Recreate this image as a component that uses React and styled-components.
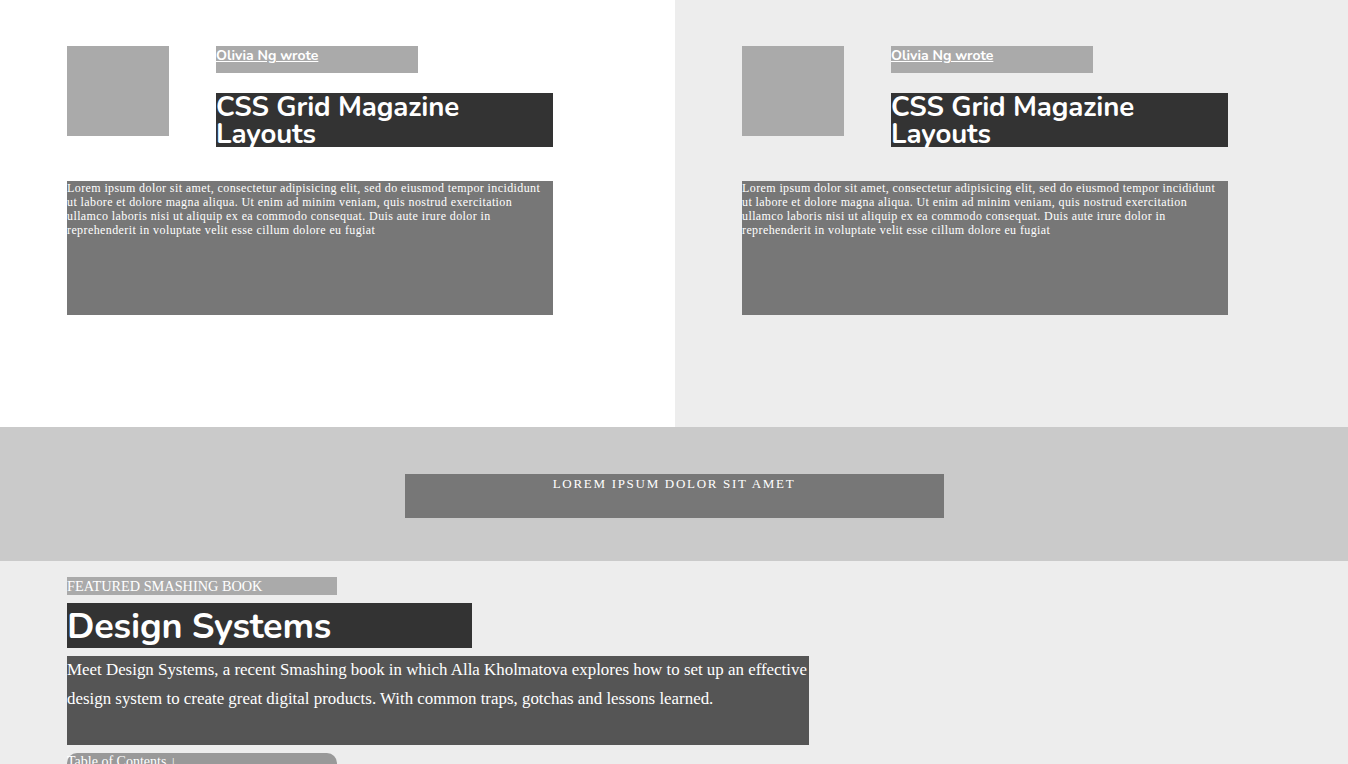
import React from "react";
import styled, { createGlobalStyle } from "styled-components";

const Global = createGlobalStyle`
  html, body { margin: 0; padding: 0; background: #ededed; }
  body { font-family: "Liberation Serif", serif; color: #fff; }
  * { box-sizing: border-box; }
`;

const Top = styled.section`
  display: grid;
  grid-template-columns: 675px 1fr;
  height: 427px;
`;

const Column = styled.div`
  background: ${(p) => (p.$alt ? "#ededed" : "#ffffff")};
  padding: 46px 0 0 67px;
`;

const Card = styled.article`
  width: 486px;
  display: grid;
  grid-template-columns: 102px 337px;
  column-gap: 47px;
  grid-template-rows: auto auto;
`;

const Avatar = styled.div`
  width: 102px;
  height: 90px;
  background: #aaaaaa;
`;

const Head = styled.div`
  display: flex;
  flex-direction: column;
  gap: 20px;
`;

const Byline = styled.a`
  display: block;
  width: 202px;
  height: 27px;
  background: #aaaaaa;
  color: #fff;
  font-family: "Nunito", "Open Sans", sans-serif;
  font-weight: 700;
  font-size: 14px;
  line-height: 19px;
  text-decoration: underline;
`;

const Title = styled.h2`
  margin: 0;
  height: 54px;
  background: #333333;
  color: #fff;
  font-family: "Nunito", "Open Sans", sans-serif;
  font-weight: 700;
  font-size: 27.6px;
  line-height: 27px;
  letter-spacing: -0.1px;
  padding-top: 1px;
`;

const Body = styled.p`
  grid-column: 1 / -1;
  margin: 34px 0 0;
  height: 134px;
  background: #777777;
  color: #fff;
  font-size: 12px;
  letter-spacing: 0.4px;
  line-height: 14px;
  padding-top: 0;
`;

const Band = styled.section`
  background: #cacaca;
  height: 134px;
  display: flex;
  justify-content: center;
  padding-top: 47px;
`;

const BandBox = styled.div`
  width: 539px;
  height: 44px;
  background: #777777;
  text-align: center;
  text-transform: uppercase;
  letter-spacing: 1.7px;
  font-size: 13px;
  line-height: 20px;
`;

const Featured = styled.section`
  padding: 16px 67px 0;
  display: flex;
  flex-direction: column;
  align-items: flex-start;
`;

const Label = styled.div`
  width: 270px;
  height: 18px;
  background: #aaaaaa;
  font-size: 14.3px;
  line-height: 18px;
  text-transform: uppercase;
`;

const BookTitle = styled.h1`
  margin: 8px 0 0;
  width: 405px;
  height: 45px;
  background: #333333;
  font-family: "Nunito", "Open Sans", sans-serif;
  font-weight: 700;
  font-size: 36px;
  line-height: 48px;
  letter-spacing: -0.2px;
`;

const Blurb = styled.p`
  margin: 8px 0 0;
  width: 742px;
  height: 89px;
  background: #555555;
  font-size: 16.9px;
  line-height: 28.5px;
`;

const TocButton = styled.button`
  margin-top: 8px;
  width: 270px;
  height: 30px;
  border: 0;
  border-radius: 10px 10px 0 0;
  background: #999999;
  color: #fff;
  font-family: "Liberation Serif", serif;
  font-size: 14px;
  text-align: left;
  padding: 0;
  line-height: 18px;
  align-self: flex-start;
  display: flex;
  align-items: flex-start;
`;

const text =
  "Lorem ipsum dolor sit amet, consectetur adipisicing elit, sed do eiusmod tempor incididunt ut labore et dolore magna aliqua. Ut enim ad minim veniam, quis nostrud exercitation ullamco laboris nisi ut aliquip ex ea commodo consequat. Duis aute irure dolor in reprehenderit in voluptate velit esse cillum dolore eu fugiat";

function ArticleCard() {
  return (
    <Card>
      <Avatar />
      <Head>
        <Byline href="#">Olivia Ng wrote</Byline>
        <Title>CSS Grid Magazine Layouts</Title>
      </Head>
      <Body>{text}</Body>
    </Card>
  );
}

export default function App() {
  return (
    <>
      <Global />
      <Top>
        <Column>
          <ArticleCard />
        </Column>
        <Column $alt>
          <ArticleCard />
        </Column>
      </Top>
      <Band>
        <BandBox>Lorem ipsum dolor sit amet</BandBox>
      </Band>
      <Featured>
        <Label>Featured Smashing Book</Label>
        <BookTitle>Design Systems</BookTitle>
        <Blurb>
          Meet Design Systems, a recent Smashing book in which Alla Kholmatova
          explores how to set up an effective design system to create great
          digital products. With common traps, gotchas and lessons learned.
        </Blurb>
        <TocButton>Table of Contents ↓</TocButton>
      </Featured>
    </>
  );
}
